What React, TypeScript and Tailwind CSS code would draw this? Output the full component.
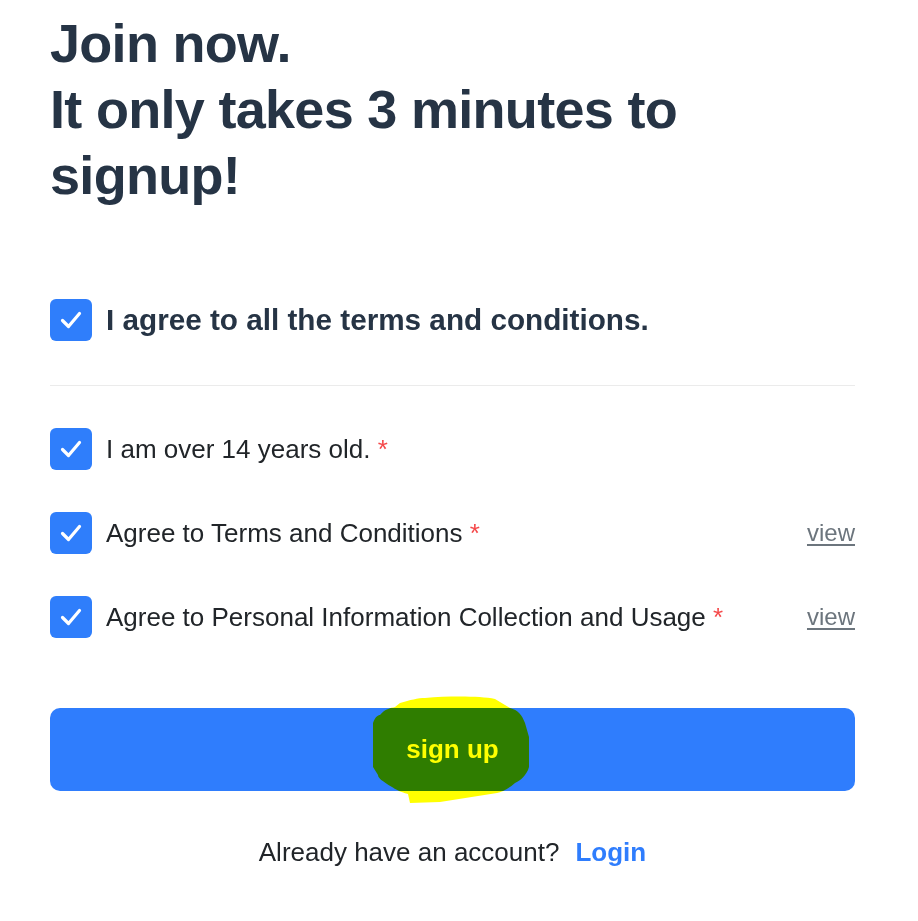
import React from 'react';

const CheckBox: React.FC = () => (
  <span className="flex h-[42px] w-[42px] flex-shrink-0 items-center justify-center rounded-[6px] bg-[#2f7efb]">
    <svg width="42" height="42" viewBox="0 0 42 42" fill="none">
      <path d="M12.5 21.5 L18.5 27.5 L29.5 14.5" stroke="#ffffff" strokeWidth="3.2" strokeLinecap="round" strokeLinejoin="round" />
    </svg>
  </span>
);

const terms = [
  { key: 'age', label: 'I am over 14 years old.', view: false },
  { key: 'terms', label: 'Agree to Terms and Conditions', view: true },
  { key: 'privacy', label: 'Agree to Personal Information Collection and Usage', view: true },
];

const App: React.FC = () => {
  return (
    <div className="min-h-[921px] w-full bg-white font-['Liberation_Sans',Arial,sans-serif] text-[#212529]">
      <div className="px-[50px] pt-[10px] w-[905px]">
        <h1 className="text-[54px] font-bold leading-[66px] tracking-[-0.7px] text-[#263445]">
          Join now.
          <br />
          It only takes 3 minutes to
          <br />
          signup!
        </h1>

        <div className="mt-[91px] flex h-[42px] items-center gap-[14px]">
          <CheckBox />
          <span className="text-[29.7px] font-bold leading-[42px] text-[#263445]">
            I agree to all the terms and conditions.
          </span>
        </div>

        <div className="mt-[44px] mb-[42px] h-px bg-[#ebebeb]" />

        <div className="flex flex-col gap-[42px]">
          {terms.map((item) => (
            <div key={item.key} className="flex h-[42px] items-center">
              <div className="flex flex-1 items-center gap-[14px]">
                <CheckBox />
                <span className="text-[26px] leading-[42px] text-[#212529]">
                  {item.label} <span className="text-[#f5494a]">*</span>
                </span>
              </div>
              {item.view && (
                <a href="#" className="text-[24px] text-[#6c757d] underline underline-offset-[3px]">
                  view
                </a>
              )}
            </div>
          ))}
        </div>

        <div className="relative mt-[70px]">
          <button
            type="button"
            className="flex h-[83px] w-full items-center justify-center rounded-[10px] bg-[#2f7dfd] text-[26px] font-bold text-white"
          >
            sign up
          </button>
          {/* marker highlight drawn over the button */}
          <svg
            className="pointer-events-none absolute left-[320px] top-[-13px] mix-blend-multiply"
            width="165"
            height="112"
            viewBox="0 0 165 112"
          >
            <path
              d="M55 3 C80 1 110 1 125 4 L140 13 C148 15 152 20 155 28 L159 42 L159 72 C157 80 150 86 145 88 C138 94 132 97 127 98 L70 107 L40 108 L38 99 C30 97 25 94 22 92 C12 86 8 83 8 80 L3 72 L3 28 C5 22 8 20 10 20 C15 14 20 13 25 12 L30 8 C40 5 48 3 55 3 Z"
              fill="#ffff00"
            />
          </svg>
        </div>

        <p className="mt-[42px] text-center text-[26px] text-[#212529]">
          Already have an account?
          <a href="#" className="ml-[16px] font-bold text-[#2f7dfd]">
            Login
          </a>
        </p>
      </div>
    </div>
  );
};

export default App;
